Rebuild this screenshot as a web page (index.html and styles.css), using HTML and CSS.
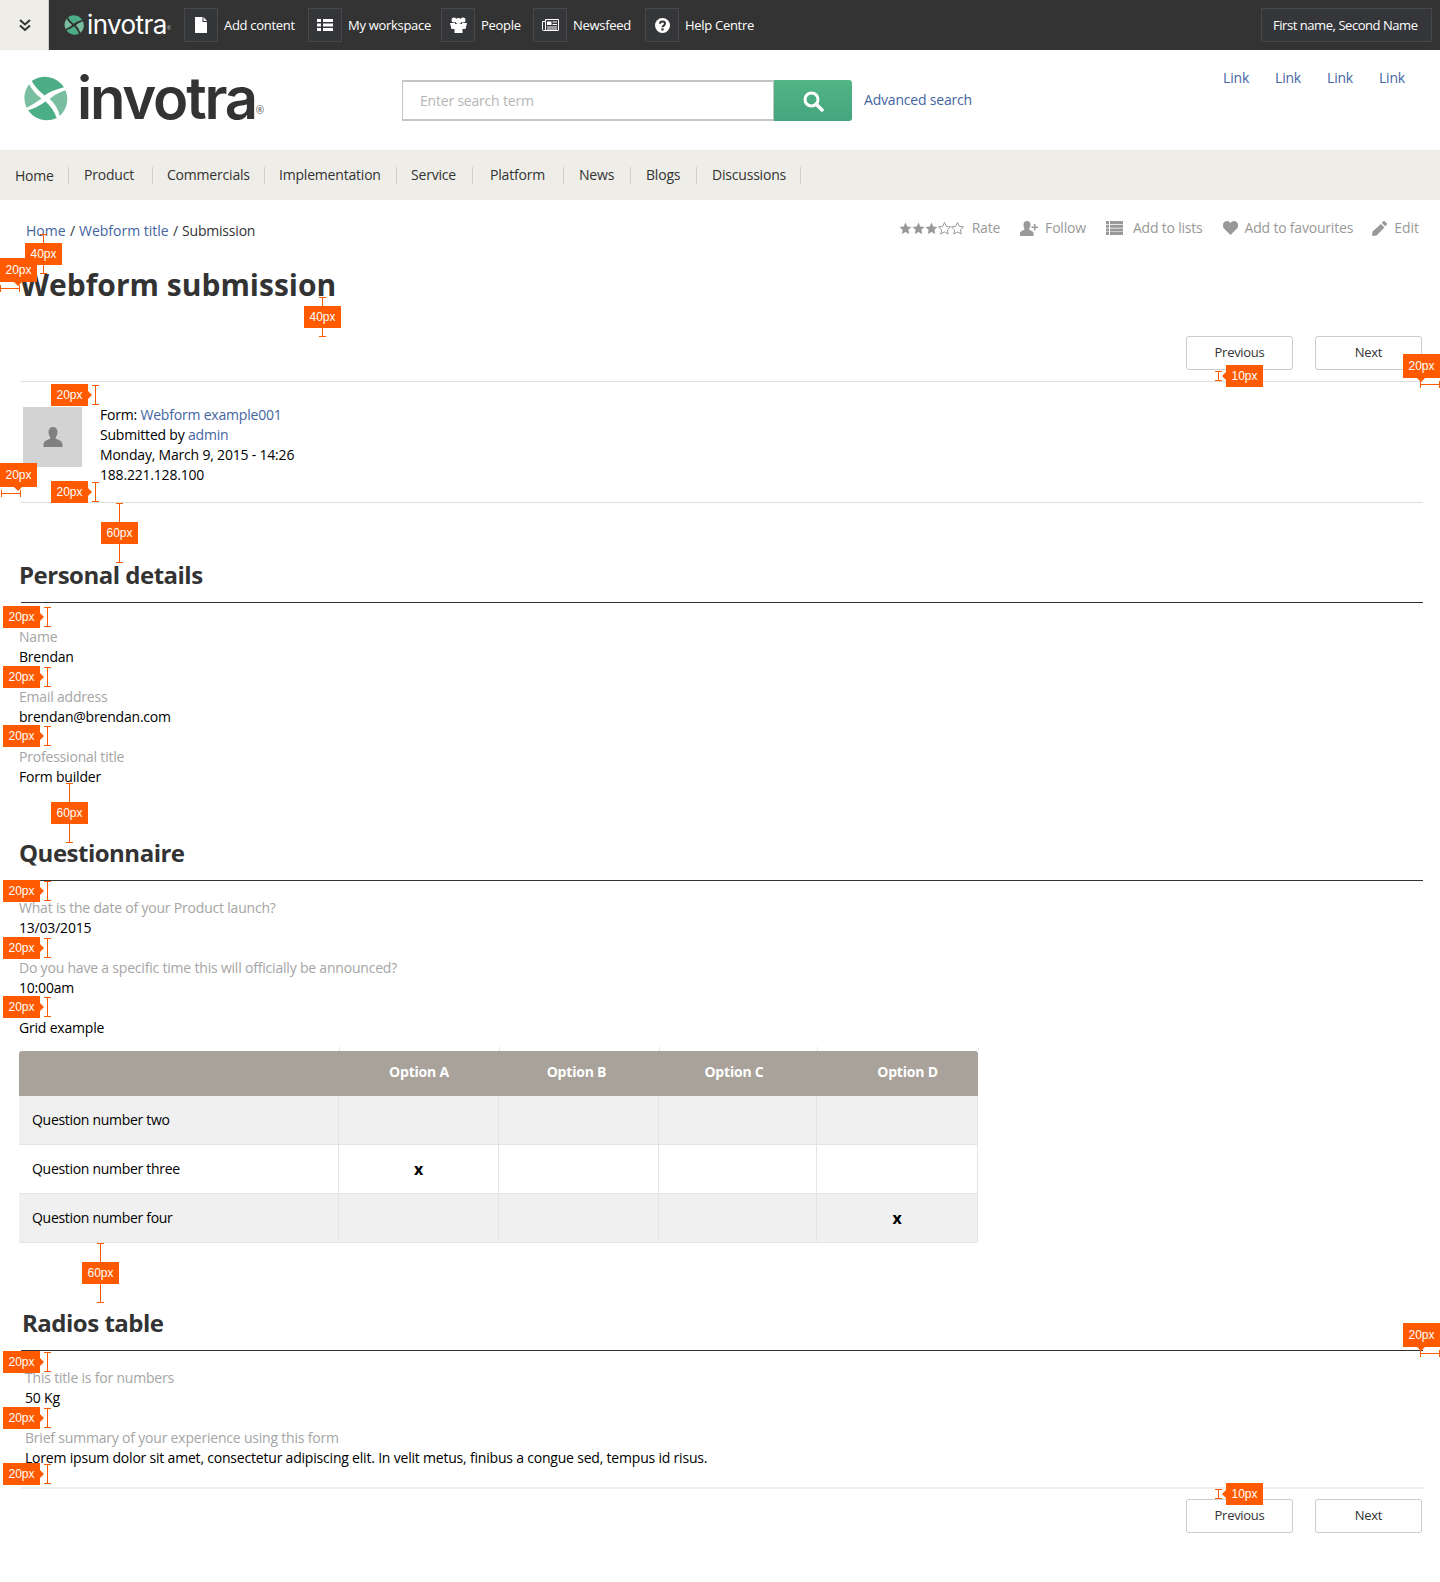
FILE: index.html
```html
<!DOCTYPE html>
<html lang="en">
<head>
    <meta charset="UTF-8">
    <meta name="viewport" content="width=device-width, initial-scale=1.0">
    <title>Webform submission</title>
    <link rel="stylesheet" href="styles.css">
</head>
<body>
    <svg class="defs" width="0" height="0">
        <symbol id="logo-mark" viewBox="0 0 44 44">
            <path fill="#4cae86" d="M8.5 5A22 22 0 0 1 40 11Q28 14 21 19Q13 13 8.5 5Z"/>
            <path fill="#79bf9f" d="M6 8Q10 16 18 22Q10 28 3.5 31A22 22 0 0 1 6 8Z"/>
            <path fill="#79bf9f" d="M41.5 14A22 22 0 0 1 36 39Q33 28 26 22.5Q32 17 41.5 14Z"/>
            <path fill="#4cae86" d="M5 33.5Q14 31 22 25Q29 31 33 41A22 22 0 0 1 5 33.5Z"/>
        </symbol>
        <symbol id="star" viewBox="0.5 0.5 13 13">
            <path d="M7 1l1.800 3.900 4.200.5-3.100 2.900.8 4.200L7 10.400 3.300 12.500l.8-4.200L1 5.400l4.200-.5z"/>
        </symbol>
    </svg>

    <div class="topbar">
        <div class="toggle">
            <svg width="14" height="14" viewBox="0 0 14 14" fill="none" stroke="#333" stroke-width="2"><path d="M2 2l5 4.500L12 2M2 7.500L7 12l5-4.500"/></svg>
        </div>
        <div class="top-brand">
            <svg class="top-brand-mark" width="20" height="20"><use href="#logo-mark"/></svg>
            <span class="top-brand-name">invotra</span><span class="top-brand-reg">®</span>
        </div>
        <a class="top-item item-add">
            <span class="top-icon"><svg width="14" height="16" viewBox="0 0 14 16" fill="#fff"><path d="M1 0h7.500v5H13v11H1zM9.500 0L13 4H9.500z"/></svg></span>
            Add content
        </a>
        <a class="top-item item-work">
            <span class="top-icon"><svg width="16" height="14" viewBox="0 0 16 14" fill="#fff"><path d="M0 1h4v3H0zM6 1h10v3H6zM0 5.500h4v3H0zM6 5.500h10v3H6zM0 10h4v3H0zM6 10h10v3H6z"/></svg></span>
            My workspace
        </a>
        <a class="top-item item-people">
            <span class="top-icon"><svg width="17" height="16" viewBox="0 0 17 16" fill="#fff"><circle cx="4" cy="3" r="2.500"/><circle cx="13" cy="3" r="2.500"/><circle cx="8.500" cy="4" r="3"/><path d="M0 6h5v6H1.500zM12 6h5l-1.500 6H12zM4.500 7h8v9h-8z"/></svg></span>
            People
        </a>
        <a class="top-item item-news">
            <span class="top-icon"><svg width="17" height="14" viewBox="0 0 17 14" fill="none" stroke="#fff"><path d="M3.500 1.500h13v10.500a.5.500 0 0 1-.5.500H1.500a1 1 0 0 1-1-1V3.500h3zM3.500 3.500V12"/><path fill="#fff" stroke="none" d="M5 3.500h4.500v3.500H5zM10.500 3.500H15v1h-4.500zM10.500 6H15v1h-4.500zM5 8.500h10v1H5zM5 10.500h10v1H5z"/></svg></span>
            Newsfeed
        </a>
        <a class="top-item item-help">
            <span class="top-icon"><svg width="15" height="15" viewBox="0 0 15 15"><circle cx="7.500" cy="7.500" r="7.500" fill="#fff"/><path fill="none" stroke="#333" stroke-width="2" d="M5 5.800c0-3.200 5-3.200 5 0 0 1.800-2.500 1.700-2.500 3.400"/><rect x="6.400" y="10.300" width="2.200" height="2.200" fill="#333"/></svg></span>
            Help Centre
        </a>
        <a class="top-user">First name, Second Name</a>
    </div>

    <header class="site-header">
        <div class="brand">
            <svg class="brand-mark" width="45" height="45"><use href="#logo-mark"/></svg>
            <span class="brand-name">invotra</span><span class="brand-reg">®</span>
        </div>
        <form class="search">
            <input class="search-input" type="text" placeholder="Enter search term">
            <button class="search-btn" type="button" aria-label="Search">
                <svg width="22" height="22" viewBox="0 0 22 22" fill="none" stroke="#fff"><circle cx="9.500" cy="9.500" r="6.500" stroke-width="3"/><path d="M14 14l6 6" stroke-width="3.500" stroke-linecap="round"/></svg>
            </button>
        </form>
        <a class="advanced">Advanced search</a>
        <nav class="top-links">
            <a>Link</a>
            <a>Link</a>
            <a>Link</a>
            <a>Link</a>
        </nav>
    </header>

    <nav class="main-nav">
        <a>Home</a>
        <a>Product</a>
        <a>Commercials</a>
        <a>Implementation</a>
        <a>Service</a>
        <a>Platform</a>
        <a>News</a>
        <a>Blogs</a>
        <a>Discussions</a>
    </nav>

    <div class="crumb-row">
        <div class="crumbs">
            <a>Home</a> <span>/</span><a>Webform title</a> <span>/</span>Submission
        </div>
        <div class="actions">
            <span class="action action-rate">
                <span class="stars">
                    <svg width="13" height="13" class="star-on"><use href="#star"/></svg>
                    <svg width="13" height="13" class="star-on"><use href="#star"/></svg>
                    <svg width="13" height="13" class="star-on"><use href="#star"/></svg>
                    <svg width="13" height="13" class="star-off"><use href="#star"/></svg>
                    <svg width="13" height="13" class="star-off"><use href="#star"/></svg>
                </span>
                Rate
            </span>
            <span class="action action-follow">
                <svg width="18" height="15" viewBox="0 0 18 15" fill="#999"><path d="M7 0c2.300 0 3.500 1.500 3.500 3.800S9.400 7 9 8.200c0 1 4.500 1.600 4.500 3.800v3H0v-3c0-2.200 4.500-2.800 4.500-3.800C4.100 7 3.500 6 3.500 3.800S4.700 0 7 0zM14 3h1.500v2.500H18V7h-2.500v2.500H14V7h-2.500V5.500H14z"/></svg>
                Follow
            </span>
            <span class="action action-lists">
                <svg width="17" height="14" viewBox="0 0 17 14" fill="#999"><path d="M0 0h3v3H0zM4 0h13v3H4zM0 3.700h3v3H0zM4 3.700h13v3H4zM0 7.400h3v3H0zM4 7.400h13v3H4zM0 11h3v3H0zM4 11h13v3H4z"/></svg>
                Add to lists
            </span>
            <span class="action action-fav">
                <svg width="15" height="14" viewBox="0 0 15 14" fill="#999"><path d="M7.500 14L1 7.500C-1.500 4.500.5 0 4 0c1.500 0 2.700.8 3.500 2C8.300.8 9.500 0 11 0c3.500 0 5.500 4.500 3 7.500z"/></svg>
                Add to favourites
            </span>
            <span class="action action-edit">
                <svg width="15" height="15" viewBox="0 0 15 15" fill="#999"><path d="M11 .5a1.500 1.500 0 0 1 2 0l1.500 1.500a1.500 1.500 0 0 1 0 2l-1.300 1.300-3.500-3.500zM9 3l3.500 3.500-8 8L0 15l.5-4.500z"/></svg>
                Edit
            </span>
        </div>
    </div>

    <main class="content">
        <h1 class="page-title">Webform submission</h1>

        <div class="pager pager-top">
            <a class="btn">Previous</a>
            <a class="btn">Next</a>
        </div>

        <div class="meta">
            <div class="avatar">
                <svg width="20" height="20" viewBox="0 0 20 20" fill="#808080"><path d="M10 0c3 0 4.500 2 4.500 5s-1.300 4.500-2 6c0 1.200 7 2 7 6.500V20H.5v-2.500c0-4.500 7-5.300 7-6.500-.7-1.500-2-3-2-6s1.500-5 4.500-5z"/></svg>
            </div>
            <div class="meta-text">
                <div>Form: <a>Webform example001</a></div>
                <div>Submitted by <a>admin</a></div>
                <div>Monday, March 9, 2015 - 14:26</div>
                <div>188.221.128.100</div>
            </div>
        </div>

        <section class="group group-personal">
            <h2>Personal details</h2>
            <div class="field"><div class="field-label">Name</div><div>Brendan</div></div>
            <div class="field"><div class="field-label">Email address</div><div>brendan@brendan.com</div></div>
            <div class="field"><div class="field-label">Professional title</div><div>Form builder</div></div>
        </section>

        <section class="group group-questions">
            <h2>Questionnaire</h2>
            <div class="field"><div class="field-label">What is the date of your Product launch?</div><div>13/03/2015</div></div>
            <div class="field"><div class="field-label">Do you have a specific time this will officially be announced?</div><div>10:00am</div></div>
            <div class="field grid-title">Grid example</div>
            <table class="grid">
                <thead>
                    <tr>
                        <th></th>
                        <th>Option A</th>
                        <th>Option B</th>
                        <th>Option C</th>
                        <th>Option D</th>
                    </tr>
                </thead>
                <tbody>
                    <tr><td>Question number two</td><td></td><td></td><td></td><td></td></tr>
                    <tr><td>Question number three</td><td>x</td><td></td><td></td><td></td></tr>
                    <tr><td>Question number four</td><td></td><td></td><td></td><td>x</td></tr>
                </tbody>
            </table>
        </section>

        <section class="group group-radios">
            <h2>Radios table</h2>
            <div class="field"><div class="field-label">This title is for numbers</div><div>50 Kg</div></div>
            <div class="field"><div class="field-label">Brief summary of your experience using this form</div><div>Lorem ipsum dolor sit amet, consectetur adipiscing elit. In velit metus, finibus a congue sed, tempus id risus.</div></div>
        </section>

        <div class="pager pager-bottom">
            <a class="btn">Previous</a>
            <a class="btn">Next</a>
        </div>
    </main>

    <!-- spacing notes drawn over the page -->
    <div class="spec-marks">
        <div class="mark beam-v mark-crumb-gap"><span class="tag tag-center">40px</span></div>
        <div class="mark beam-h mark-left-title"><span class="tag tag-down">20px</span></div>
        <div class="mark beam-v mark-title-gap"><span class="tag tag-center">40px</span></div>
        <div class="mark beam-v mark-meta-top"><span class="tag tag-left">20px</span></div>
        <div class="mark beam-h mark-left-meta"><span class="tag tag-down">20px</span></div>
        <div class="mark beam-v mark-meta-bottom"><span class="tag tag-left">20px</span></div>
        <div class="mark beam-v mark-personal-top"><span class="tag tag-center">60px</span></div>
        <div class="mark beam-v mark-pager-top"><span class="tag tag-right">10px</span></div>
        <div class="mark beam-h mark-right-top"><span class="tag tag-down">20px</span></div>
        <div class="mark beam-v mark-p1"><span class="tag tag-left">20px</span></div>
        <div class="mark beam-v mark-p2"><span class="tag tag-left">20px</span></div>
        <div class="mark beam-v mark-p3"><span class="tag tag-left">20px</span></div>
        <div class="mark beam-v mark-quest-top"><span class="tag tag-center">60px</span></div>
        <div class="mark beam-v mark-q1"><span class="tag tag-left">20px</span></div>
        <div class="mark beam-v mark-q2"><span class="tag tag-left">20px</span></div>
        <div class="mark beam-v mark-q3"><span class="tag tag-left">20px</span></div>
        <div class="mark beam-v mark-radios-top"><span class="tag tag-center">60px</span></div>
        <div class="mark beam-h mark-right-radios"><span class="tag tag-down">20px</span></div>
        <div class="mark beam-v mark-r1"><span class="tag tag-left">20px</span></div>
        <div class="mark beam-v mark-r2"><span class="tag tag-left">20px</span></div>
        <div class="mark beam-v mark-r3"><span class="tag tag-left">20px</span></div>
        <div class="mark beam-v mark-pager-bottom"><span class="tag tag-right">10px</span></div>
    </div>
</body>
</html>
```

FILE: styles.css
```css
body {
    font-family: "Open Sans", "Noto Sans", sans-serif;
    font-size: 14px;
    line-height: 20px;
    letter-spacing: -0.2px;
    color: #000;
    background-color: #fff;
    margin: 0;
    height: 1582px;
    position: relative;
    overflow: hidden;
}
a {
    color: #44659f;
}
.defs {
    position: absolute;
}

/* dark admin bar */
.topbar {
    display: flex;
    align-items: center;
    height: 50px;
    background-color: #333;
    color: #fff;
    font-size: 13px;
    letter-spacing: -0.3px;
}
.toggle {
    display: flex;
    align-items: center;
    justify-content: center;
    width: 46px;
    height: 50px;
    padding-left: 2px;
    background-color: #eeede8;
    border-right: 1px solid #ccc;
}
.top-brand {
    display: flex;
    align-items: center;
    width: 135px;
    padding-left: 15px;
    box-sizing: border-box;
}
.top-brand-name {
    font-family: "Inter", sans-serif;
    font-size: 26px;
    font-weight: 400;
    letter-spacing: -0.6px;
    line-height: 30px;
    margin-left: 3px;
}
.top-brand-reg {
    font-size: 5px;
    align-self: flex-end;
    line-height: 24px;
    color: #bbb;
}
.top-item {
    display: flex;
    align-items: center;
    color: #fff;
    width: 124px;
}
.top-icon {
    display: flex;
    align-items: center;
    justify-content: center;
    width: 32px;
    height: 32px;
    margin-right: 6px;
    background-color: #35363a;
    border: 1px solid #484848;
}
.item-work { width: 133px; }
.item-people { width: 92px; }
.item-news { width: 112px; }
.item-help { width: auto; }
.top-user {
    margin-left: auto;
    margin-right: 8px;
    padding: 6px 12px 6px 11px;
    height: 20px;
    width: 146px;
    white-space: nowrap;
    letter-spacing: -0.45px;
    color: #fff;
    background-color: #35363a;
    border: 1px solid #484848;
}

/* logo and search */
.site-header {
    display: flex;
    align-items: center;
    height: 100px;
    position: relative;
}
.brand {
    display: flex;
    align-items: center;
    width: 402px;
    padding-left: 23px;
    box-sizing: border-box;
}
.brand-mark {
    margin-top: -3px;
}
.brand-name {
    font-family: "Inter", sans-serif;
    font-size: 58px;
    font-weight: 600;
    line-height: 60px;
    letter-spacing: -2.2px;
    color: #333;
    margin: -4px 0 0 9px;
}
.brand-reg {
    font-size: 10px;
    color: #555;
    align-self: flex-end;
    line-height: 20px;
    margin-bottom: 8px;
}
.search {
    display: flex;
    width: 450px;
    height: 41px;
    align-self: flex-start;
    margin-top: 30px;
}
.search-input {
    flex: 1;
    min-width: 0;
    font: inherit;
    letter-spacing: inherit;
    font-size: 14px;
    padding: 0 17px;
    border: 1px solid #c4c4c4;
    border-width: 2px 1px;
    border-radius: 0;
}
.search-input::placeholder {
    color: #b5b5b5;
}
.search-btn {
    width: 78px;
    padding: 0;
    border: 0;
    border-radius: 0 3px 3px 0;
    background: linear-gradient(#52b586, #43a67d);
    display: flex;
    align-items: center;
    justify-content: center;
}
.advanced {
    margin-left: 12px;
}
.top-links {
    display: flex;
    gap: 26px;
    margin-left: auto;
    margin-right: 35px;
    align-self: flex-start;
    margin-top: 18px;
}

/* main menu */
.main-nav {
    display: grid;
    grid-template-columns: 69px 84px 112px 132px 76px 91px 67px 66px 104px;
    align-items: center;
    height: 50px;
    background-color: #eeede8;
    color: #333;
}
.main-nav a {
    color: #333;
    height: 17px;
    line-height: 15px;
    padding-left: 15px;
    border-right: 1px solid #d2d0c9;
    white-space: nowrap;
}
.main-nav a:first-child {
    line-height: 17px;
}
.main-nav a:nth-child(3), .main-nav a:nth-child(4), .main-nav a:nth-child(5) {
    padding-left: 14px;
}
.main-nav a:nth-child(6) {
    padding-left: 17px;
}

/* breadcrumb and page actions */
.crumb-row {
    display: flex;
    justify-content: space-between;
    height: 50px;
    padding: 18px 21px 0 26px;
    box-sizing: border-box;
}
.crumbs {
    color: #333;
    padding-top: 3px;
}
.crumbs a {
    letter-spacing: 0;
}
.crumbs span {
    margin: 0 4px 0 1px;
}
.actions {
    display: flex;
    gap: 20px;
    color: #999;
}
.action {
    display: flex;
    align-items: center;
    gap: 7px;
    height: 20px;
}
.action-rate {
    gap: 8px;
}
.action-lists {
    gap: 10px;
}
.action-fav {
    margin-right: -1px;
}
.action-edit {
    letter-spacing: 0;
}
.stars {
    display: flex;
}
.star-on {
    fill: #999;
}
.star-off {
    fill: none;
    stroke: #999;
}

/* page body */
.content {
    padding: 0 17px 0 21px;
}
.page-title {
    margin: 15px 0 0 -1px;
    font-size: 30px;
    line-height: 40px;
    font-weight: 700;
    color: #333;
    letter-spacing: 0;
}
.pager {
    display: flex;
    justify-content: flex-end;
    gap: 22px;
}
.pager-top {
    margin-top: 31px;
    padding-bottom: 11px;
    padding-right: 1px;
    border-bottom: 1px solid #ddd;
}
.pager-bottom {
    margin-top: 10px;
    padding-right: 1px;
}
.btn {
    display: block;
    box-sizing: border-box;
    width: 107px;
    height: 34px;
    line-height: 31px;
    text-align: center;
    color: #333;
    font-size: 13px;
    letter-spacing: -0.3px;
    border: 1px solid #ccc;
    border-radius: 3px;
}
.meta {
    display: flex;
    height: 121px;
    padding-top: 23px;
    box-sizing: border-box;
    border-bottom: 1px solid #ddd;
}
.avatar {
    display: flex;
    align-items: center;
    justify-content: center;
    width: 59px;
    height: 60px;
    margin: 2px 18px 0 2px;
    background-color: #d3d3d3;
}
.group h2 {
    margin: 0;
    padding-bottom: 12px;
    font-size: 24px;
    line-height: 30px;
    font-weight: 700;
    color: #333;
    letter-spacing: -0.5px;
    border-bottom: 1px solid #333;
    text-indent: -2px;
}
.group-personal {
    padding-top: 57px;
}
.group-questions {
    padding-top: 51px;
}
.group-radios {
    padding-top: 65px;
}
.field {
    margin-left: -2px;
    margin-bottom: 20px;
}
.field-label {
    color: #a5a5a5;
}
.group-personal h2 + .field {
    margin-top: 24px;
}
.group-questions h2 + .field {
    margin-top: 17px;
}
.group-radios h2 {
    text-indent: 1px;
}
.group-radios h2 + .field {
    margin-top: 17px;
}
.group-radios .field {
    margin-left: 4px;
}
.group-personal .field:last-child {
    margin-bottom: 0;
}
.group-radios .field:last-child {
    margin-bottom: 0;
    padding-bottom: 19px;
    border-bottom: 2px solid #eee;
    margin-left: 0;
}
.group-radios .field:last-child > div {
    margin-left: 4px;
}
.grid-title {
    margin-bottom: 13px;
}
.grid {
    table-layout: fixed;
    width: 959px;
    margin-left: -2px;
    border-collapse: separate;
    border-spacing: 0;
    font-size: 14px;
}
.grid th:nth-child(1), .grid td:nth-child(1) { width: 320px; }
.grid th:nth-child(2), .grid td:nth-child(2) { width: 160px; }
.grid th:nth-child(3), .grid td:nth-child(3) { width: 160px; }
.grid th:nth-child(4), .grid td:nth-child(4) { width: 158px; }
.grid th:nth-child(5), .grid td:nth-child(5) { width: 161px; }
.grid th {
    position: relative;
    box-sizing: border-box;
    height: 45px;
    padding: 0 0 3px;
    background-color: #a8a29a;
    color: #fff;
    font-weight: 700;
}
.grid th:first-child { border-top-left-radius: 3px; }
.grid th:last-child { border-top-right-radius: 3px; }
.grid th::after {
    content: "";
    position: absolute;
    top: -4px;
    right: -1px;
    width: 1px;
    height: 4px;
    background-color: #e6e6e6;
}
.grid th:nth-child(3) { padding-right: 5px; }
.grid th:nth-child(4) { padding-right: 8px; }
.grid th:nth-child(5) { padding-left: 20px; }
.grid td {
    box-sizing: border-box;
    height: 49px;
    padding: 0;
    text-align: center;
    font-size: 16px;
    font-weight: 700;
    border-right: 1px solid #e4e4e4;
    border-bottom: 1px solid #e4e4e4;
}
.grid td:first-child {
    padding-left: 13px;
    text-align: left;
    font-size: 14px;
    font-weight: 400;
    letter-spacing: -0.3px;
}
.grid tbody tr:nth-child(odd) td {
    background-color: #f0f0f0;
}

/* orange spacing marks */
.spec-marks {
    position: absolute;
    top: 0;
    left: 0;
    width: 1440px;
    height: 0;
}
.mark {
    position: absolute;
    box-sizing: border-box;
    border: 0 solid #ff5a00;
}
.beam-v {
    width: 7px;
    border-width: 1px 0;
}
.beam-h {
    height: 7px;
    border-width: 0 1px;
}
.beam-v::before, .beam-h::before {
    content: "";
    position: absolute;
    background-color: #ff5a00;
}
.beam-v::before {
    left: 3px;
    top: 0;
    bottom: 0;
    width: 1px;
}
.beam-h::before {
    top: 3px;
    left: 0;
    right: 0;
    height: 1px;
}
.tag {
    position: absolute;
    width: 37px;
    height: 22px;
    font-family: "Liberation Sans", Arial, sans-serif;
    font-size: 12px;
    line-height: 22px;
    letter-spacing: 0;
    text-align: center;
    color: #fff;
    background-color: #ff5a00;
}
.tag-center {
    left: -15px;
    top: 50%;
    margin-top: -11px;
}
.tag-left {
    right: calc(100% + 4px);
    top: 50%;
    margin-top: -11px;
}
.tag-right {
    left: calc(100% + 4px);
    top: 50%;
    margin-top: -11px;
}
.tag-down {
    left: -1px;
    height: 24px;
    line-height: 24px;
    bottom: calc(100% + 3px);
}
.tag-left::after, .tag-right::after, .tag-down::after {
    content: "";
    position: absolute;
    border: 4px solid transparent;
}
.tag-left::after {
    left: 100%;
    top: 7px;
    border-left-color: #ff5a00;
}
.tag-right::after {
    right: 100%;
    top: 7px;
    border-right-color: #ff5a00;
}
.tag-down::after {
    top: 100%;
    left: 14px;
    border-top-color: #ff5a00;
}
.mark-crumb-gap { left: 40px; top: 234px; height: 40px; }
.mark-left-title { left: 0; top: 285px; width: 20px; }
.mark-title-gap { left: 319px; top: 297px; height: 40px; }
.mark-meta-top { left: 92px; top: 385px; height: 20px; }
.mark-left-meta { left: 1px; top: 490px; width: 20px; }
.mark-left-meta .tag { left: -2px; }
.mark-meta-bottom { left: 92px; top: 482px; height: 20px; }
.mark-personal-top { left: 116px; top: 503px; height: 60px; }
.mark-pager-top { left: 1215px; top: 371px; height: 10px; }
.mark-right-top { left: 1420px; top: 381px; width: 20px; }
.mark-right-top .tag { left: -18px; }
.mark-p1 { left: 44px; top: 607px; height: 20px; }
.mark-p2 { left: 44px; top: 667px; height: 20px; }
.mark-p3 { left: 44px; top: 726px; height: 20px; }
.mark-quest-top { left: 66px; top: 783px; height: 60px; }
.mark-q1 { left: 44px; top: 881px; height: 20px; }
.mark-q2 { left: 44px; top: 938px; height: 20px; }
.mark-q3 { left: 44px; top: 997px; height: 20px; }
.mark-radios-top { left: 97px; top: 1243px; height: 60px; }
.mark-right-radios { left: 1420px; top: 1350px; width: 20px; }
.mark-right-radios .tag { left: -18px; }
.mark-r1 { left: 44px; top: 1352px; height: 20px; }
.mark-r2 { left: 44px; top: 1408px; height: 20px; }
.mark-r3 { left: 44px; top: 1464px; height: 20px; }
.mark-pager-bottom { left: 1215px; top: 1489px; height: 10px; }
```
